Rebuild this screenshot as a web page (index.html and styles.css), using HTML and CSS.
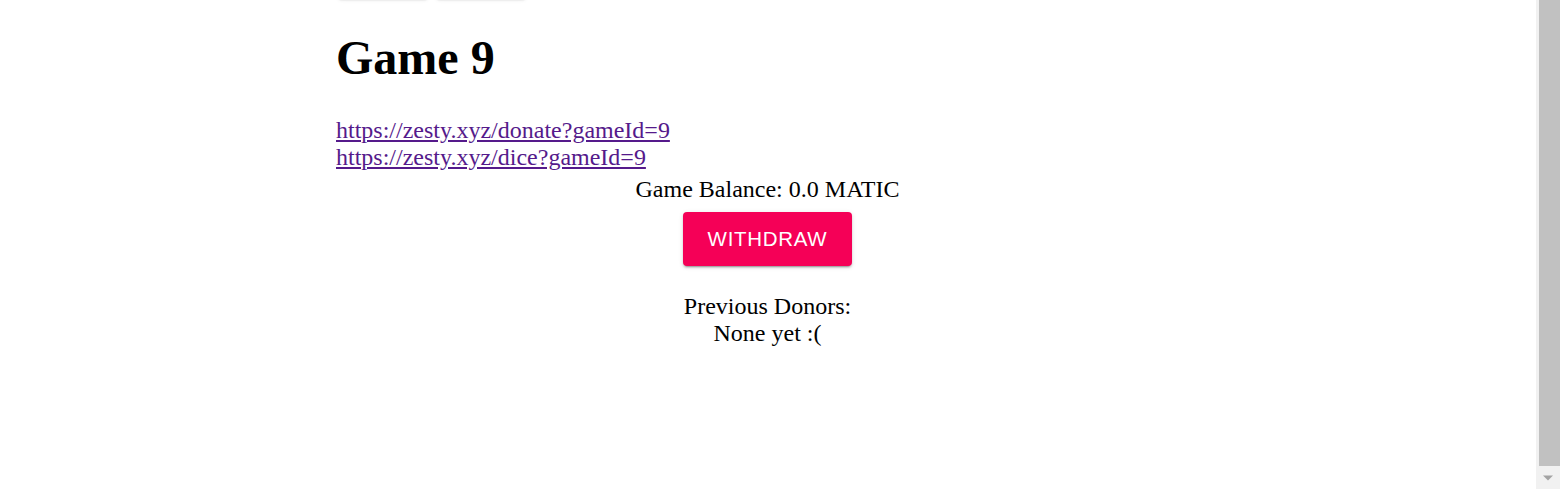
FILE: index.html
```html
<!DOCTYPE html>
<html lang="en">
<head>
<meta charset="utf-8">
<title>Game 9</title>
<link rel="stylesheet" href="styles.css">
</head>
<body>
<div class="viewport">
  <main class="page">
    <div class="topbar">
      <button class="ghost-btn" aria-label="Home"></button>
      <button class="ghost-btn" aria-label="Games"></button>
    </div>
    <h1 class="title">Game 9</h1>
    <div class="links">
      <a class="link" href="#donate">https://zesty.xyz/donate?gameId=9</a>
      <a class="link" href="#dice">https://zesty.xyz/dice?gameId=9</a>
    </div>
    <div class="center">
      <div class="balance">Game Balance: 0.0 MATIC</div>
      <button class="withdraw">WITHDRAW</button>
      <div class="donors">
        <div>Previous Donors:</div>
        <div>None yet :(</div>
      </div>
    </div>
  </main>
</div>
<div class="scrollbar">
  <div class="thumb"></div>
  <div class="arrow"><svg width="12" height="8" viewBox="0 0 12 8"><path d="M1 1.5h10L6 6.5z" fill="#a3a3a3"/></svg></div>
</div>
</body>
</html>
```
FILE: styles.css
```css
html, body {
  margin: 0;
  padding: 0;
  overflow: hidden;
  background: #fff;
}
body {
  font-family: "Liberation Serif", "Times New Roman", serif;
  font-size: 24px;
  color: #000;
}
.viewport {
  height: 489px;
  margin-right: 24px;
  overflow: hidden;
}
.page {
  width: 863px;
  margin-left: 336px;
}
.topbar {
  display: flex;
  gap: 8px;
  margin-top: -38px;
  height: 36px;
  padding-left: 2px;
}
.ghost-btn {
  height: 36px;
  width: 90px;
  border: 0;
  border-radius: 4px;
  background: #fff;
  box-shadow: 0px 3px 1px -2px rgba(0,0,0,0.2), 0px 2px 2px 0px rgba(0,0,0,0.14), 0px 1px 5px 0px rgba(0,0,0,0.12);
}
.title {
  font-size: 48px;
  font-weight: bold;
  margin: 32px 0 32px;
}
.links {
  display: flex;
  flex-direction: column;
  align-items: flex-start;
}
.link {
  color: #551a8b;
  text-decoration: underline;
}
.center {
  display: flex;
  flex-direction: column;
  align-items: center;
  text-align: center;
}
.balance {
  margin-top: 5px;
}
.withdraw {
  margin-top: 9px;
  height: 54px;
  width: 169px;
  border: 0;
  border-radius: 4px;
  background: #f50057;
  color: #fff;
  font-family: "Liberation Sans", Arial, sans-serif;
  font-size: 20.5px;
  letter-spacing: 0.7px;
  padding: 0;
  box-shadow: 0px 3px 1px -2px rgba(0,0,0,0.2), 0px 2px 2px 0px rgba(0,0,0,0.14), 0px 1px 5px 0px rgba(0,0,0,0.12);
}
.donors {
  margin-top: 27px;
}
.scrollbar {
  position: fixed;
  top: 0;
  right: 0;
  width: 24px;
  height: 489px;
  background: #f1f1f1;
  display: flex;
  flex-direction: column;
  align-items: center;
}
.thumb {
  width: 21px;
  height: 466px;
  margin-left: 2px;
  background: #c1c1c1;
}
.arrow {
  flex: 1;
  display: flex;
  align-items: center;
  justify-content: center;
}
```
